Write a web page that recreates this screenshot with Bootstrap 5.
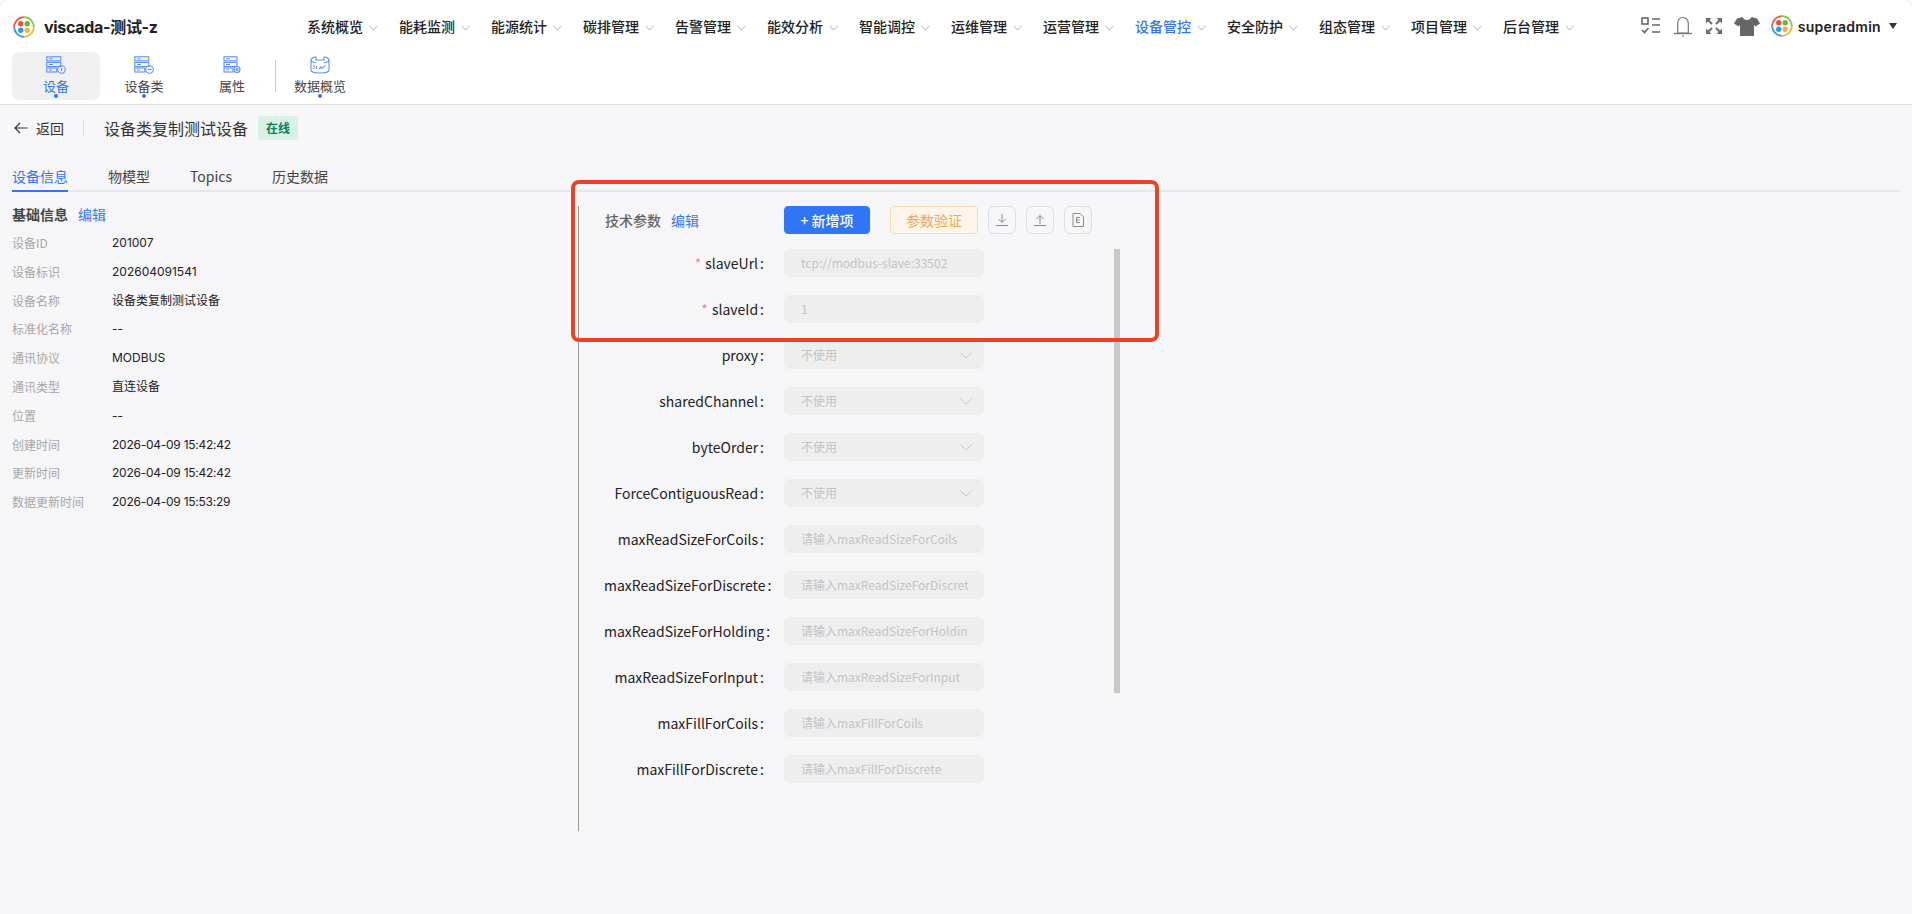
<!doctype html>
<html lang="zh-CN">
<head>
<meta charset="utf-8">
<title>viscada</title>
<link href="https://cdn.jsdelivr.net/npm/bootstrap@5.3.0/dist/css/bootstrap.min.css" rel="stylesheet">
<style>
html,body{height:914px;overflow:hidden}
body{background:#f6f5f8;font-family:"Noto Sans CJK SC","Noto Sans",sans-serif;color:#222;font-size:14px;position:relative}
.top-head{background:#fff;height:105px;border-bottom:1px solid #e0e0e0;padding:0 12px;border-top-left-radius:10px;border-top-right-radius:10px}
.row-main{height:52px}
.brand-wrap{width:295px;padding-top:2px}
.brand-name{font-family:"Inter","Noto Sans CJK SC",sans-serif;font-size:16px;font-weight:700;color:#222;margin-left:9px;letter-spacing:-.3px}
.brand-logo{margin-left:1px}
.menu-item{width:92px;font-size:14px;font-weight:500;color:#222;text-decoration:none;line-height:20px}
.menu-item.on{color:#3075f6}
.menu-item svg{margin-left:6px;margin-top:3px;flex:none}
.util-box{margin-left:auto;padding-right:3px}
.util-box svg+svg{margin-left:12px}
.util-box .gap-s{margin-left:11px}
.user-name{font-family:"Inter","Noto Sans",sans-serif;font-weight:600;font-size:14px;color:#222;margin-left:5px;letter-spacing:.3px}
.user-caret{margin-left:8px}
.tool-item{width:88px;height:48px;border-radius:8px;text-decoration:none;color:#444;font-size:13px;line-height:18px;padding-top:4px;position:relative}
.tool-item.on{background:#f0f0f0;color:#3075f6}
.tool-item svg{display:block;margin-bottom:3px}
.tool-dot{position:absolute;left:50%;bottom:2px;width:4px;height:4px;margin-left:-2px;border-radius:50%;background:#3075f6}
.tool-row{height:52px}
.sep-wrap{width:0;position:relative;height:48px}
.tool-sep-line{position:absolute;left:-1px;top:8px;width:1px;height:32px;background:#cfcfcf}
.back-row{height:46px;padding-left:14px}
.back-link{color:#333;text-decoration:none;font-size:14px}
.back-link svg{margin-right:8px}
.back-sep{width:1px;height:16px;background:#dcdcdc;margin:0 20px 0 19px}
.dev-title{font-size:16px;color:#333;line-height:24px}
.state-tag{margin-left:10px;width:40px;height:24px;background:#d9f0e6;color:#0a7d5a;font-size:12px;font-weight:700;border-radius:2px}
.tab-bar{margin:9px 12px 0;border-bottom:2px solid #e6e6ef;height:32px;gap:40px}
.tab-bar a{color:#444;text-decoration:none;font-size:14px;height:32px;line-height:32px;margin-bottom:-2px}
.tab-bar a.on{color:#3075f6;border-bottom:2px solid #3075f6}
.info-pane{width:578px;flex:none;padding:12px 0 0 12px}
.sec-head{font-size:14px;font-weight:700;color:#444;line-height:20px;margin-bottom:5px}
.edit-link{color:#3a78f2;font-size:14px;text-decoration:none;font-weight:400;margin-left:10px}
.kv-row{height:28.8px;font-size:12px;line-height:28.8px}
.kv-key{width:100px;color:#a8a8a8}
.kv-val{color:#222;font-family:"Inter","Noto Sans CJK SC",sans-serif}
.kv-date{letter-spacing:-.25px}
.tech-pane{margin-top:14px;height:625px;width:560px;flex:none;border-left:1px solid #999}
.tech-head{height:28px;padding-left:26px}
.tech-title{font-size:14px;font-weight:500;color:#666}
.btn-add{margin-left:85px;width:86px;height:28px;padding:0;background:#3075f6;border-color:#3075f6;color:#fff;font-size:14px;font-weight:500;border-radius:4px;line-height:1}
.btn-verify{margin-left:20px;width:88px;height:28px;padding:0;background:#fdf5ea;border:1px solid #f8dcb0;color:#eaa85a;font-size:14px;border-radius:4px;line-height:1}
.btn-ico{margin-left:10px;width:28px;height:28px;padding:0;background:transparent;border:1px solid #dcdfe6;border-radius:6px}
.form-scroll{position:relative;margin-top:15px}
.scroll-thumb{position:absolute;left:535px;top:0;width:6px;height:444px;background:#c8c8c8}
.form-line{height:28px;margin-bottom:18px}
.form-label-cell{width:160px;margin:0 0 0 25px;padding:0;text-align:right;white-space:nowrap;font-size:14px;line-height:28px;color:#222;flex:none}
.lbl-colon{margin-left:2px}
.req{color:#f08a8a;margin-right:4px}
.field-box{margin-left:20px;width:200px;height:28px;flex:none;background:#eee;border:0;border-radius:6px;padding:0 16px 0 17px;font-size:12px;line-height:28px;color:#c4c4c4;min-height:0}
.field-text{display:block;overflow:hidden;white-space:nowrap}
.field-sel{display:flex;justify-content:space-between;align-items:center;padding-right:12px}
.mark-frame{position:absolute;left:571px;top:180px;width:588px;height:162px;border:4px solid #ee4027;border-radius:8px;pointer-events:none}
</style>
</head>
<body>
<header class="top-head">
  <div class="d-flex align-items-center row-main">
    <div class="d-flex align-items-center brand-wrap">
      <svg class="brand-logo" width="22" height="22" viewBox="0 0 22 22"><path d="M11 1.200A9.800 9.800 0 0 1 20.800 11" fill="none" stroke="#8bc34a" stroke-width="1.800"/><path d="M20.800 11A9.800 9.800 0 0 1 11 20.800" fill="none" stroke="#f5b942" stroke-width="1.800"/><path d="M11 20.800A9.800 9.800 0 0 1 1.200 11" fill="none" stroke="#3d9be9" stroke-width="1.800"/><path d="M1.200 11A9.800 9.800 0 0 1 11 1.200" fill="none" stroke="#ea5a3c" stroke-width="1.800"/><circle cx="7.800" cy="7.800" r="2.700" fill="#e8503a"/><circle cx="14.200" cy="7.800" r="2.700" fill="#6cb33f"/><circle cx="7.800" cy="14.200" r="2.700" fill="#2f96e8"/><circle cx="14.200" cy="14.200" r="2.700" fill="#f4b13d"/></svg>
      <span class="brand-name">viscada-测试-z</span>
    </div>
    <nav class="d-flex">
      <a class="menu-item d-flex align-items-center" href="#">系统概览<svg width="9" height="6" viewBox="0 0 9 6"><path d="M.5.800 4.500 5 8.500.800" fill="none" stroke="#b0b0b0"/></svg></a>
      <a class="menu-item d-flex align-items-center" href="#">能耗监测<svg width="9" height="6" viewBox="0 0 9 6"><path d="M.5.800 4.500 5 8.500.800" fill="none" stroke="#b0b0b0"/></svg></a>
      <a class="menu-item d-flex align-items-center" href="#">能源统计<svg width="9" height="6" viewBox="0 0 9 6"><path d="M.5.800 4.500 5 8.500.800" fill="none" stroke="#b0b0b0"/></svg></a>
      <a class="menu-item d-flex align-items-center" href="#">碳排管理<svg width="9" height="6" viewBox="0 0 9 6"><path d="M.5.800 4.500 5 8.500.800" fill="none" stroke="#b0b0b0"/></svg></a>
      <a class="menu-item d-flex align-items-center" href="#">告警管理<svg width="9" height="6" viewBox="0 0 9 6"><path d="M.5.800 4.500 5 8.500.800" fill="none" stroke="#b0b0b0"/></svg></a>
      <a class="menu-item d-flex align-items-center" href="#">能效分析<svg width="9" height="6" viewBox="0 0 9 6"><path d="M.5.800 4.500 5 8.500.800" fill="none" stroke="#b0b0b0"/></svg></a>
      <a class="menu-item d-flex align-items-center" href="#">智能调控<svg width="9" height="6" viewBox="0 0 9 6"><path d="M.5.800 4.500 5 8.500.800" fill="none" stroke="#b0b0b0"/></svg></a>
      <a class="menu-item d-flex align-items-center" href="#">运维管理<svg width="9" height="6" viewBox="0 0 9 6"><path d="M.5.800 4.500 5 8.500.800" fill="none" stroke="#b0b0b0"/></svg></a>
      <a class="menu-item d-flex align-items-center" href="#">运营管理<svg width="9" height="6" viewBox="0 0 9 6"><path d="M.5.800 4.500 5 8.500.800" fill="none" stroke="#b0b0b0"/></svg></a>
      <a class="menu-item on d-flex align-items-center" href="#">设备管控<svg width="9" height="6" viewBox="0 0 9 6"><path d="M.5.800 4.500 5 8.500.800" fill="none" stroke="#b0b0b0"/></svg></a>
      <a class="menu-item d-flex align-items-center" href="#">安全防护<svg width="9" height="6" viewBox="0 0 9 6"><path d="M.5.800 4.500 5 8.500.800" fill="none" stroke="#b0b0b0"/></svg></a>
      <a class="menu-item d-flex align-items-center" href="#">组态管理<svg width="9" height="6" viewBox="0 0 9 6"><path d="M.5.800 4.500 5 8.500.800" fill="none" stroke="#b0b0b0"/></svg></a>
      <a class="menu-item d-flex align-items-center" href="#">项目管理<svg width="9" height="6" viewBox="0 0 9 6"><path d="M.5.800 4.500 5 8.500.800" fill="none" stroke="#b0b0b0"/></svg></a>
      <a class="menu-item d-flex align-items-center" href="#">后台管理<svg width="9" height="6" viewBox="0 0 9 6"><path d="M.5.800 4.500 5 8.500.800" fill="none" stroke="#b0b0b0"/></svg></a>
    </nav>
    <div class="d-flex align-items-center util-box">
      <svg width="20" height="18" viewBox="0 0 20 18" fill="none" stroke="#666" stroke-width="1.600"><rect x="1" y="1" width="6" height="6"/><path d="M11 2h8M11 8h8M11 15h8M1 13l2.500 2.500L7.500 11"/></svg>
      <svg width="20" height="21" viewBox="0 0 20 21" fill="none" stroke="#777" stroke-width="1.200"><path d="M10 1.500c-3.700 0-5.300 3-5.300 6.300V17h10.600V7.800C15.300 4.500 13.700 1.500 10 1.500Z"/><path d="M1 17.500h18" stroke-width="1.400"/><path d="M9 20h2"/></svg>
      <svg width="18" height="18" viewBox="0 0 18 18" fill="#6b6b6b" stroke="#6b6b6b"><path d="M1 1h5.500L1 6.500ZM17 1v5.500L11.500 1ZM1 17v-5.500L6.500 17ZM17 17h-5.500L17 11.500Z" stroke="none"/><path d="M3 3l4 4M15 3l-4 4M3 15l4-4M15 15l-4-4" stroke-width="2" fill="none"/></svg>
      <svg class="gap-s" width="26" height="19" viewBox="0 0 26 19" fill="#666"><path d="M8.500 0 3 1.500 0 6.500l4.500 3 1.500-1.500V19h14V8l1.500 1.500 4.500-3-3-5L17.500 0c-.8 1.800-2.500 3-4.500 3S9.300 1.800 8.500 0Z"/></svg>
      <svg class="gap-s" width="22" height="22" viewBox="0 0 22 22"><path d="M11 1.200A9.800 9.800 0 0 1 20.800 11" fill="none" stroke="#8bc34a" stroke-width="1.800"/><path d="M20.800 11A9.800 9.800 0 0 1 11 20.800" fill="none" stroke="#f5b942" stroke-width="1.800"/><path d="M11 20.800A9.800 9.800 0 0 1 1.200 11" fill="none" stroke="#3d9be9" stroke-width="1.800"/><path d="M1.200 11A9.800 9.800 0 0 1 11 1.200" fill="none" stroke="#ea5a3c" stroke-width="1.800"/><circle cx="7.800" cy="7.800" r="2.700" fill="#e8503a"/><circle cx="14.200" cy="7.800" r="2.700" fill="#6cb33f"/><circle cx="7.800" cy="14.200" r="2.700" fill="#2f96e8"/><circle cx="14.200" cy="14.200" r="2.700" fill="#f4b13d"/></svg>
      <span class="user-name">superadmin</span>
      <svg class="user-caret" width="8" height="6" viewBox="0 0 8 6"><path d="M0 0h8L4 6Z" fill="#333"/></svg>
    </div>
  </div>
  <div class="d-flex tool-row">
    <a class="tool-item on d-flex flex-column align-items-center" href="#">
      <svg width="20" height="18" viewBox="0 0 20 18" fill="none" stroke="#5b8ff5" stroke-width="1.100"><rect x=".8" y=".8" width="14" height="4"/><rect x=".8" y="6.500" width="14" height="4"/><rect x=".8" y="12" width="10" height="4"/><path d="M3 2.800h4M3 8.500h4M3 14h3" stroke-width="1"/><circle cx="15.500" cy="13.500" r="3.800"/><path d="M15.500 12v3"/></svg>
      设备<span class="tool-dot"></span>
    </a>
    <a class="tool-item d-flex flex-column align-items-center" href="#">
      <svg width="20" height="18" viewBox="0 0 20 18" fill="none" stroke="#5b8ff5" stroke-width="1.100"><rect x=".8" y=".8" width="14" height="4"/><rect x=".8" y="6.500" width="14" height="4"/><rect x=".8" y="12" width="10" height="4"/><path d="M3 2.800h4M3 8.500h4M3 14h3" stroke-width="1"/><circle cx="15.500" cy="13.500" r="3.800"/><path d="M13.500 13.500h4"/></svg>
      设备类<span class="tool-dot"></span>
    </a>
    <a class="tool-item d-flex flex-column align-items-center" href="#">
      <svg width="20" height="18" viewBox="0 0 20 18" fill="none" stroke="#5b8ff5" stroke-width="1.100"><rect x="2" y=".8" width="13" height="4"/><rect x="2" y="6.500" width="13" height="4"/><rect x="2" y="12" width="9" height="4"/><path d="M4 2.800h4M4 8.500h4M4 14h3" stroke-width="1"/><circle cx="15" cy="13.500" r="3"/><circle cx="15" cy="13.500" r="1"/></svg>
      属性
    </a>
    <div class="sep-wrap"><span class="tool-sep-line"></span></div>
    <a class="tool-item d-flex flex-column align-items-center" href="#">
      <svg width="20" height="18" viewBox="0 0 20 18" fill="none" stroke="#5b8ff5" stroke-width="1.100"><path d="M1 4v10c0 1.800 4 3 9 3s9-1.200 9-3V4"/><path d="M1 4c0-1.800 3-3 5-3v3h8V1c2 0 5 1.200 5 3M1 4c0 1.500 3 2.500 5 2.700M19 4c0 1.500-3 2.500-5 2.700"/><path d="M4 9v4M6.500 10v3M9 13l2-2 1.500 1.500L15.500 9"/></svg>
      数据概览<span class="tool-dot"></span>
    </a>
  </div>
</header>

<main>
  <div class="d-flex align-items-center back-row">
    <a class="back-link d-flex align-items-center" href="#"><svg width="14" height="12" viewBox="0 0 14 12" fill="none" stroke="#333" stroke-width="1.200"><path d="M13.500 6H1M6 1 1 6l5 5"/></svg>返回</a>
    <span class="back-sep"></span>
    <span class="dev-title">设备类复制测试设备</span>
    <span class="state-tag d-flex align-items-center justify-content-center">在线</span>
  </div>
  <div class="d-flex tab-bar">
    <a class="on" href="#">设备信息</a>
    <a href="#">物模型</a>
    <a href="#">Topics</a>
    <a href="#">历史数据</a>
  </div>
  <div class="d-flex">
    <section class="info-pane">
      <div class="sec-head">基础信息<a class="edit-link" href="#">编辑</a></div>
      <div class="d-flex kv-row"><span class="kv-key">设备ID</span><span class="kv-val">201007</span></div>
      <div class="d-flex kv-row"><span class="kv-key">设备标识</span><span class="kv-val">202604091541</span></div>
      <div class="d-flex kv-row"><span class="kv-key">设备名称</span><span class="kv-val">设备类复制测试设备</span></div>
      <div class="d-flex kv-row"><span class="kv-key">标准化名称</span><span class="kv-val">--</span></div>
      <div class="d-flex kv-row"><span class="kv-key">通讯协议</span><span class="kv-val">MODBUS</span></div>
      <div class="d-flex kv-row"><span class="kv-key">通讯类型</span><span class="kv-val">直连设备</span></div>
      <div class="d-flex kv-row"><span class="kv-key">位置</span><span class="kv-val">--</span></div>
      <div class="d-flex kv-row"><span class="kv-key">创建时间</span><span class="kv-val kv-date">2026-04-09 15:42:42</span></div>
      <div class="d-flex kv-row"><span class="kv-key">更新时间</span><span class="kv-val kv-date">2026-04-09 15:42:42</span></div>
      <div class="d-flex kv-row"><span class="kv-key">数据更新时间</span><span class="kv-val kv-date">2026-04-09 15:53:29</span></div>
    </section>
    <section class="tech-pane">
      <div class="d-flex align-items-center tech-head">
        <span class="tech-title">技术参数</span><a class="edit-link" href="#">编辑</a>
        <button class="btn btn-add" type="button">+ 新增项</button>
        <button class="btn btn-verify" type="button">参数验证</button>
        <button class="btn btn-ico d-flex align-items-center justify-content-center" type="button"><svg width="12" height="12" viewBox="0 0 12 12" fill="none" stroke="#8a8a8a"><path d="M6 0v8M2.500 5 6 8.500 9.500 5M0 11.500h12"/></svg></button>
        <button class="btn btn-ico d-flex align-items-center justify-content-center" type="button"><svg width="12" height="12" viewBox="0 0 12 12" fill="none" stroke="#8a8a8a"><path d="M6 10V2M2.500 5 6 1.500 9.500 5M0 11.500h12"/></svg></button>
        <button class="btn btn-ico d-flex align-items-center justify-content-center" type="button"><svg width="12" height="14" viewBox="0 0 12 14" fill="none" stroke="#8a8a8a"><path d="M1 .5h7L11.500 4v9.500H1Z"/><path d="M8 4.500H4.500v5H8M4.500 7H7.500" stroke-width="1"/></svg></button>
      </div>
      <div class="form-scroll">
        <span class="scroll-thumb"></span>
        <div class="d-flex form-line"><label class="form-label-cell"><span class="req">*</span>slaveUrl<span class="lbl-colon">:</span></label><div class="form-control field-box"><span class="field-text">tcp://modbus-slave:33502</span></div></div>
        <div class="d-flex form-line"><label class="form-label-cell"><span class="req">*</span>slaveId<span class="lbl-colon">:</span></label><div class="form-control field-box"><span class="field-text">1</span></div></div>
        <div class="d-flex form-line"><label class="form-label-cell">proxy<span class="lbl-colon">:</span></label><div class="form-control field-box field-sel"><span class="field-text">不使用</span><svg width="12" height="7" viewBox="0 0 12 7"><path d="M.5.800 6 6 11.500.800" fill="none" stroke="#c8c8c8"/></svg></div></div>
        <div class="d-flex form-line"><label class="form-label-cell">sharedChannel<span class="lbl-colon">:</span></label><div class="form-control field-box field-sel"><span class="field-text">不使用</span><svg width="12" height="7" viewBox="0 0 12 7"><path d="M.5.800 6 6 11.500.800" fill="none" stroke="#c8c8c8"/></svg></div></div>
        <div class="d-flex form-line"><label class="form-label-cell">byteOrder<span class="lbl-colon">:</span></label><div class="form-control field-box field-sel"><span class="field-text">不使用</span><svg width="12" height="7" viewBox="0 0 12 7"><path d="M.5.800 6 6 11.500.800" fill="none" stroke="#c8c8c8"/></svg></div></div>
        <div class="d-flex form-line"><label class="form-label-cell">ForceContiguousRead<span class="lbl-colon">:</span></label><div class="form-control field-box field-sel"><span class="field-text">不使用</span><svg width="12" height="7" viewBox="0 0 12 7"><path d="M.5.800 6 6 11.500.800" fill="none" stroke="#c8c8c8"/></svg></div></div>
        <div class="d-flex form-line"><label class="form-label-cell">maxReadSizeForCoils<span class="lbl-colon">:</span></label><div class="form-control field-box"><span class="field-text">请输入maxReadSizeForCoils</span></div></div>
        <div class="d-flex form-line"><label class="form-label-cell">maxReadSizeForDiscrete<span class="lbl-colon">:</span></label><div class="form-control field-box"><span class="field-text">请输入maxReadSizeForDiscrete</span></div></div>
        <div class="d-flex form-line"><label class="form-label-cell">maxReadSizeForHolding<span class="lbl-colon">:</span></label><div class="form-control field-box"><span class="field-text">请输入maxReadSizeForHolding</span></div></div>
        <div class="d-flex form-line"><label class="form-label-cell">maxReadSizeForInput<span class="lbl-colon">:</span></label><div class="form-control field-box"><span class="field-text">请输入maxReadSizeForInput</span></div></div>
        <div class="d-flex form-line"><label class="form-label-cell">maxFillForCoils<span class="lbl-colon">:</span></label><div class="form-control field-box"><span class="field-text">请输入maxFillForCoils</span></div></div>
        <div class="d-flex form-line"><label class="form-label-cell">maxFillForDiscrete<span class="lbl-colon">:</span></label><div class="form-control field-box"><span class="field-text">请输入maxFillForDiscrete</span></div></div>
      </div>
    </section>
  </div>
</main>

<div class="mark-frame"></div>
<script src="https://cdn.jsdelivr.net/npm/bootstrap@5.3.0/dist/js/bootstrap.bundle.min.js"></script>
</body>
</html>
